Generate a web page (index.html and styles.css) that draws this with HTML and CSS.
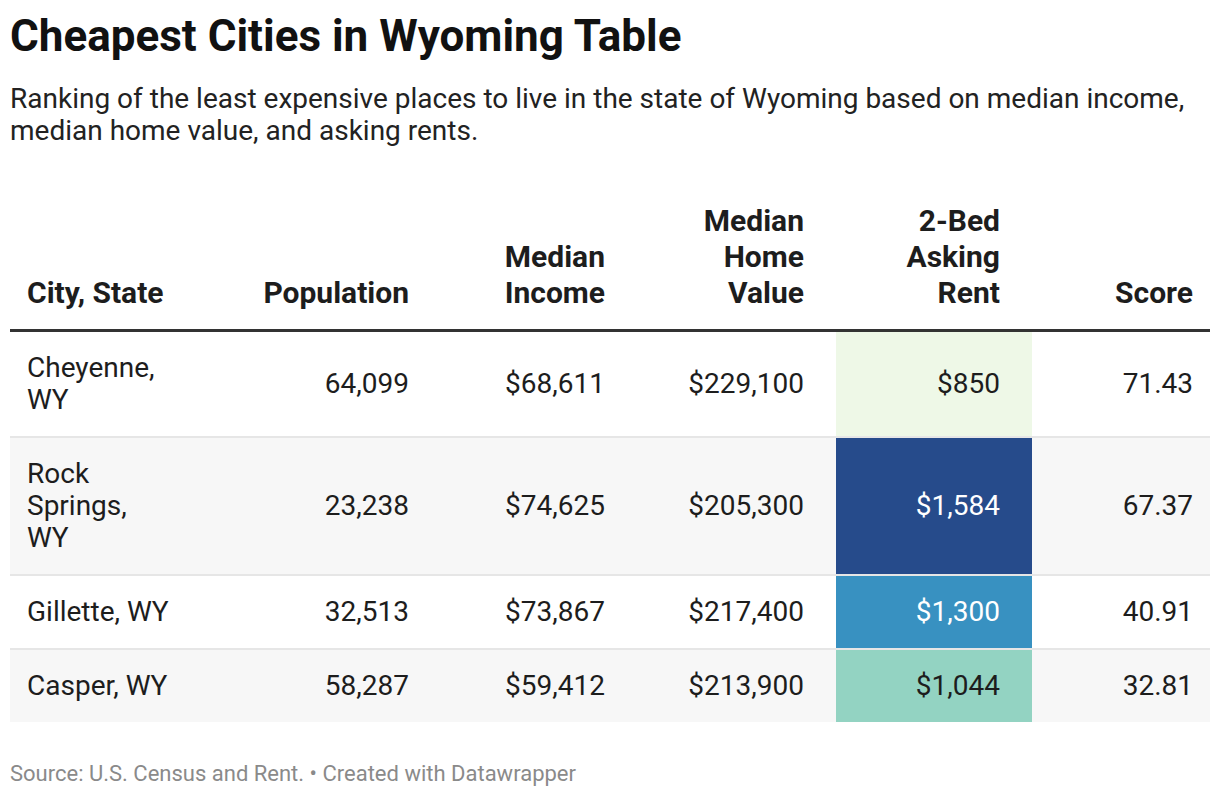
FILE: index.html
```html
<!DOCTYPE html>
<html lang="en">
<head>
<meta charset="utf-8">
<title>Cheapest Cities in Wyoming Table</title>
<link rel="stylesheet" href="styles.css">
</head>
<body>
<div class="chart">
  <h1 class="title">Cheapest Cities in Wyoming Table</h1>
  <p class="subtitle">Ranking of the least expensive places to live in the state of Wyoming based on median income, median home value, and asking rents.</p>
  <table class="data">
    <colgroup>
      <col class="c1"><col class="c2"><col class="c3"><col class="c4"><col class="c5"><col class="c6">
    </colgroup>
    <thead>
      <tr>
        <th class="left">City, State</th>
        <th>Population</th>
        <th>Median Income</th>
        <th>Median Home Value</th>
        <th class="rentcol">2-Bed Asking Rent</th>
        <th class="last">Score</th>
      </tr>
    </thead>
    <tbody>
      <tr>
        <td class="left">Cheyenne, WY</td>
        <td>64,099</td>
        <td>$68,611</td>
        <td>$229,100</td>
        <td class="rentcol r1">$850</td>
        <td class="last">71.43</td>
      </tr>
      <tr class="alt">
        <td class="left">Rock Springs, WY</td>
        <td>23,238</td>
        <td>$74,625</td>
        <td>$205,300</td>
        <td class="rentcol r2">$1,584</td>
        <td class="last">67.37</td>
      </tr>
      <tr>
        <td class="left">Gillette, WY</td>
        <td>32,513</td>
        <td>$73,867</td>
        <td>$217,400</td>
        <td class="rentcol r3">$1,300</td>
        <td class="last">40.91</td>
      </tr>
      <tr class="alt">
        <td class="left">Casper, WY</td>
        <td>58,287</td>
        <td>$59,412</td>
        <td>$213,900</td>
        <td class="rentcol r4">$1,044</td>
        <td class="last">32.81</td>
      </tr>
    </tbody>
  </table>
  <p class="footer">Source: U.S. Census and Rent. • Created with Datawrapper</p>
</div>
</body>
</html>
```
FILE: styles.css
```css
html, body {
  margin: 0;
  padding: 0;
  background: #ffffff;
}
body {
  font-family: Roboto, "Liberation Sans", sans-serif;
  color: #1d1d1d;
}
.chart {
  padding: 10px 10px 0 10px;
}
.title {
  margin: 0;
  font-size: 44px;
  line-height: 52px;
  font-weight: 700;
  color: #111;
}
.subtitle {
  margin: 21px 0 0 0;
  font-size: 28px;
  line-height: 32px;
  font-weight: 400;
  color: #222;
}
.data {
  margin-top: 56px;
  width: 1200px;
  border-collapse: collapse;
  table-layout: fixed;
}
.c1 { width: 190px; }
.c2 { width: 241px; }
.c3 { width: 196px; }
.c4 { width: 199px; }
.c5 { width: 196px; }
.c6 { width: 178px; }
.data th {
  font-size: 30px;
  line-height: 36px;
  font-weight: 700;
  color: #1d1d1d;
  text-align: right;
  vertical-align: bottom;
  padding: 0 32px 18px 50px;
  border-bottom: 3px solid #333;
}
.data td {
  font-size: 28px;
  line-height: 32px;
  font-weight: 400;
  color: #1d1d1d;
  text-align: right;
  vertical-align: middle;
  padding: 20px 32px 20px 0;
  border-bottom: 2px solid #e6e6e6;
}
.data tbody tr:last-child td {
  border-bottom: none;
}
.data .left {
  text-align: left;
  padding-left: 17px;
  padding-right: 31px;
}
.data .last {
  padding-right: 17px;
}
.alt td {
  background: #f7f7f7;
}
.data td.r1 { background: #eef8e7; color: #1d1d1d; }
.data td.r2 { background: #264b8b; color: #ffffff; }
.data td.r3 { background: #3891c1; color: #ffffff; }
.data td.r4 { background: #93d3c2; color: #1d1d1d; }
.footer {
  margin: 39px 0 0 0;
  font-size: 22px;
  line-height: 26px;
  color: #8a8a8a;
}
```
